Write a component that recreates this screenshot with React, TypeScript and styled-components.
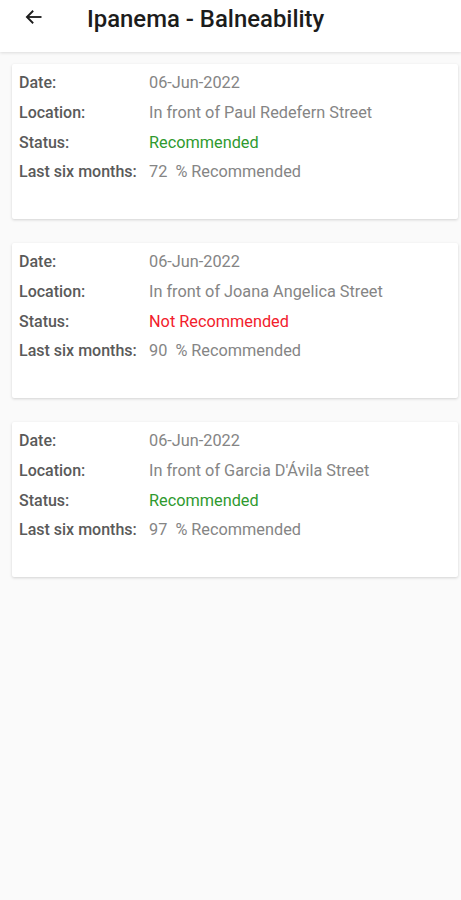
import React from 'react';
import styled, { createGlobalStyle } from 'styled-components';

const GlobalStyle = createGlobalStyle`
  html, body {
    margin: 0;
    padding: 0;
    background: #fafafa;
    font-family: Roboto, 'Liberation Sans', sans-serif;
  }
`;

const Page = styled.div`
  min-height: 900px;
  background: #fafafa;
`;

const Header = styled.header`
  height: 52px;
  background: #ffffff;
  display: flex;
  align-items: flex-start;
  box-shadow: 0 1px 3px rgba(0, 0, 0, 0.12);
  position: relative;
`;

const BackButton = styled.div`
  width: 24px;
  height: 24px;
  margin: 5px 0 0 22px;
  display: flex;
  align-items: center;
  justify-content: center;
`;

const Title = styled.h1`
  margin: 4px 0 0 41px;
  font-size: 23.9px;
  line-height: 30px;
  font-weight: 500;
  color: #1c1c1c;
`;

const List = styled.div`
  padding-top: 12px;
  display: flex;
  flex-direction: column;
  gap: 24px;
`;

const Card = styled.div`
  box-sizing: border-box;
  height: 155px;
  margin: 0 3px 0 12px;
  background: #ffffff;
  box-shadow: 0 1px 3px rgba(0, 0, 0, 0.16);
  border-radius: 2px;
  padding: 4px 0 0 7px;
  display: grid;
  grid-template-columns: 130px 1fr;
  grid-auto-rows: 29.7px;
  align-content: start;
  align-items: center;
`;

const Label = styled.div`
  font-size: 16px;
  font-weight: 500;
  color: #5a5a5a;
`;

const Value = styled.div<{ $tone?: 'good' | 'bad' }>`
  font-size: 16.3px;
  font-weight: 400;
  white-space: pre;
  color: ${(p) => (p.$tone === 'good' ? '#2f9a2f' : p.$tone === 'bad' ? '#f2202c' : '#858585')};
`;

type Report = {
  date: string;
  location: string;
  recommended: boolean;
  percent: number;
};

const reports: Report[] = [
  { date: '06-Jun-2022', location: 'In front of Paul Redefern Street', recommended: true, percent: 72 },
  { date: '06-Jun-2022', location: 'In front of Joana Angelica Street', recommended: false, percent: 90 },
  { date: '06-Jun-2022', location: "In front of Garcia D'Ávila Street", recommended: true, percent: 97 },
];

const App = () => {
  return (
    <Page>
      <GlobalStyle />
      <Header>
        <BackButton>
          <svg width="20" height="20" viewBox="0 0 24 24" fill="none" stroke="#1c1c1c" strokeWidth="2.2">
            <path d="M21 12H3.5" />
            <path d="M11 4.5 3.5 12l7.5 7.5" />
          </svg>
        </BackButton>
        <Title>Ipanema - Balneability</Title>
      </Header>
      <List>
        {reports.map((r, index) => (
          <Card key={index}>
            <Label>Date:</Label>
            <Value>{r.date}</Value>
            <Label>Location:</Label>
            <Value>{r.location}</Value>
            <Label>Status:</Label>
            <Value $tone={r.recommended ? 'good' : 'bad'}>
              {r.recommended ? 'Recommended' : 'Not Recommended'}
            </Value>
            <Label>Last six months:</Label>
            <Value>{`${r.percent}  % Recommended`}</Value>
          </Card>
        ))}
      </List>
    </Page>
  );
};

export default App;
